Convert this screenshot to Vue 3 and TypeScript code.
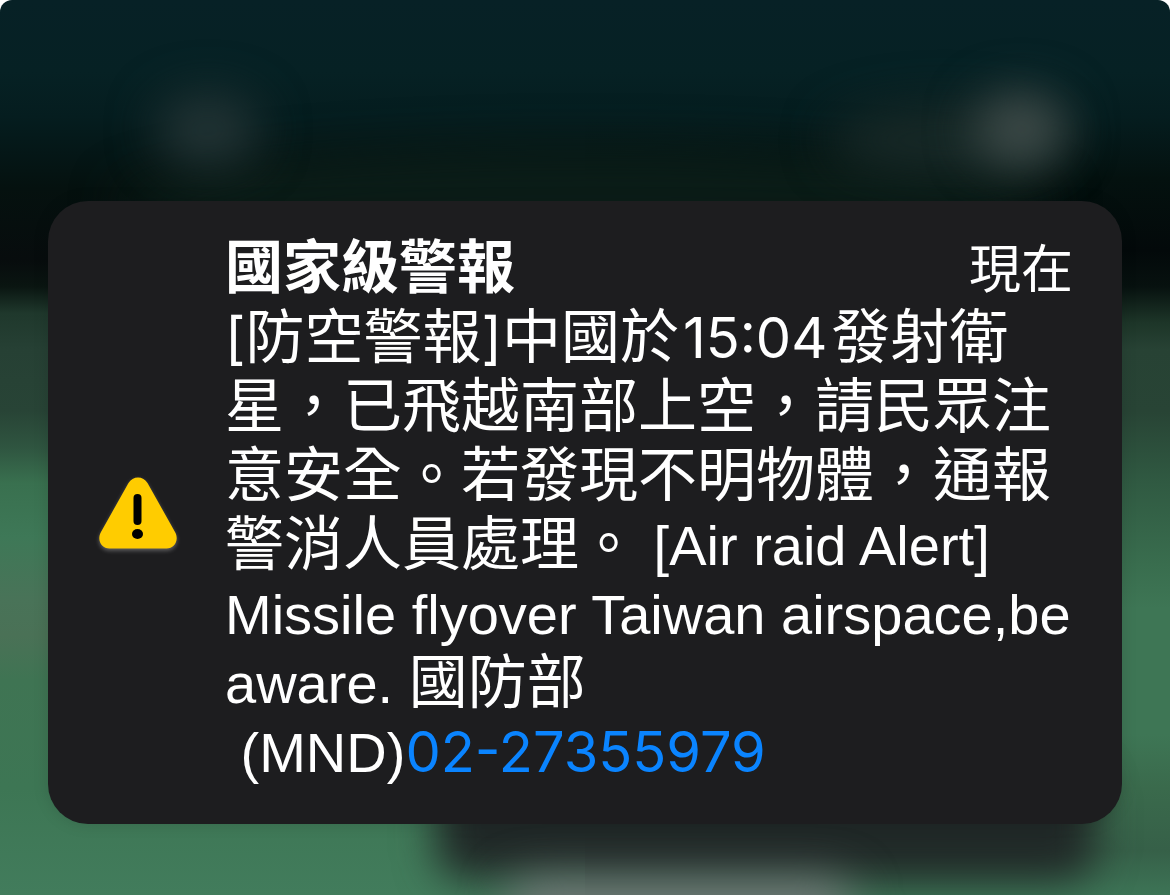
<script setup lang="ts">
interface Run {
  text: string
  kind: 'han' | 'latin' | 'bracket' | 'figure' | 'phone'
}

const title = '國家級警報'
const time = '現在'

const lines: Run[][] = [
  [
    { text: '[', kind: 'bracket' },
    { text: '防空警報', kind: 'han' },
    { text: ']', kind: 'bracket' },
    { text: '中國於', kind: 'han' },
    { text: '15:04', kind: 'figure' },
    { text: '發射衛', kind: 'han' },
  ],
  [{ text: '星，已飛越南部上空，請民眾注', kind: 'han' }],
  [{ text: '意安全。若發現不明物體，通報', kind: 'han' }],
  [
    { text: '警消人員處理。', kind: 'han' },
    { text: ' [Air raid Alert]', kind: 'latin' },
  ],
  [{ text: 'Missile flyover Taiwan airspace,be', kind: 'latin' }],
  [
    { text: 'aware. ', kind: 'latin' },
    { text: '國防部', kind: 'han' },
  ],
  [
    { text: ' (MND)', kind: 'latin' },
    { text: '02-27355979', kind: 'phone' },
  ],
]
</script>

<template>
  <main class="screen" lang="zh-Hant">
    <div class="glow glow-center"></div>
    <div class="glow glow-left"></div>
    <div class="glow glow-wide"></div>
    <div class="glow glow-right"></div>
    <div class="glow dock"></div>
    <div class="glow dock-light"></div>
    <article class="card" role="alert">
      <svg class="icon" viewBox="0 0 78 72" aria-hidden="true">
        <path
          d="M29.5 6 C33.5 -1.5 44.500 -1.500 48.500 6 L76 55 C80.500 63 75.500 71.500 67.500 71.500 L10.500 71.500 C2.500 71.500 -2.500 63 2 55 Z"
          fill="#fc0"
        />
        <rect x="34.500" y="17" width="8" height="31" rx="4" fill="#000" />
        <ellipse cx="38.500" cy="57" rx="5.500" ry="5" fill="#000" />
      </svg>
      <div class="content">
        <header class="head">
          <h1 class="title">{{ title }}</h1>
          <time class="time">{{ time }}</time>
        </header>
        <p class="message">
          <span v-for="(line, i) in lines" :key="i" class="line">
            <template v-for="(run, j) in line" :key="j">
              <a v-if="run.kind === 'phone'" class="phone" href="tel:02-27355979">{{ run.text }}</a>
              <span v-else :class="run.kind">{{ run.text }}</span>
            </template>
          </span>
        </p>
      </div>
    </article>
  </main>
</template>

<style>
body {
  margin: 0;
  background: #fff;
}
</style>

<style scoped>
.screen {
  position: relative;
  box-sizing: border-box;
  min-height: 100vh;
  padding: 201px 48px 71px;
  display: flex;
  flex-direction: column;
  overflow: hidden;
  border-radius: 12px 12px 0 0;
  font-family: Inter, 'Noto Sans CJK TC', sans-serif;
  color: #fff;
  background:
    linear-gradient(
      #072126 0%, #062124 8%, #051d1f 13%, #04110f 20%, #03090a 28%, #07110f 32%,
      #1d3528 36%, #274234 39%, #284435 46%, #305a42 54%, #396d4e 63%, #3e7655 68%,
      #3e7655 82%, #3a6a4c 88%, #366048 95%, #3d7456 100%
    ) right / 50% 100% no-repeat,
    linear-gradient(
      #072126 0%, #062124 8%, #051d1f 13%, #05110f 21%, #070c0d 29%, #0a1511 32%,
      #1f382c 35%, #264034 39%, #284436 46%, #2f5540 50%, #39704f 54%, #3e7857 60%,
      #497358 67%, #4a7156 71%, #3f7453 76%, #3d7654 88%, #427c5c 100%
    );
}

.glow {
  position: absolute;
  border-radius: 50%;
  filter: blur(24px);
}

.glow-center {
  left: 10%;
  right: 10%;
  top: 150px;
  height: 110px;
  background: #0b1d18;
}

.glow-left {
  left: 156px;
  top: 94px;
  width: 104px;
  height: 72px;
  background: #233435;
}

.glow-right {
  right: 102px;
  top: 92px;
  width: 94px;
  height: 74px;
  background: #3e4b49;
}

.glow-wide {
  right: 110px;
  top: 106px;
  width: 230px;
  height: 68px;
  background: #182927;
}

.dock {
  left: 436px;
  right: 75px;
  bottom: 16px;
  height: 110px;
  border-radius: 30px;
  background: #202827;
  filter: blur(20px);
}

.dock-light {
  left: 510px;
  right: 320px;
  bottom: -70px;
  height: 84px;
  border-radius: 20px;
  background: #737577;
}

.card {
  position: relative;
  box-sizing: border-box;
  flex: 1;
  display: flex;
  align-items: center;
  gap: 48px;
  padding: 33px 49px 39px 51px;
  border-radius: 40px;
  background: #1d1d1f;
  box-shadow: 0 0 16px #00000020;
}

.icon {
  flex: none;
  width: 78px;
  height: 72px;
  margin-top: 6px;
  overflow: visible;
  filter: drop-shadow(0 2px 2px #ffffff50);
}

.content {
  flex: 1;
  min-width: 0;
}

.head {
  display: flex;
  align-items: baseline;
  justify-content: space-between;
  line-height: 65px;
}

.title {
  margin: 0;
  font-size: 58px;
  font-weight: 700;
}

.time {
  font-size: 52px;
}

.message {
  margin: 0;
  font-size: 59px;
}

.line {
  display: block;
  height: 69px;
  line-height: 69px;
  white-space: pre;
}

.latin,
.bracket,
.figure,
.phone {
  font-size: 56px;
  line-height: 1;
}

.latin {
  font-family: 'Liberation Sans', sans-serif;
}

.figure {
  margin: 0 4px;
}

.phone {
  color: #0a84ff;
  text-decoration: none;
}
</style>
